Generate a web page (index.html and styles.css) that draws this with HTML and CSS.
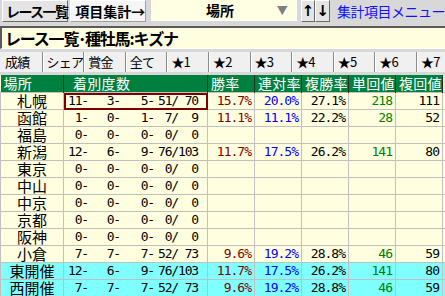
FILE: index.html
```html
<!DOCTYPE html>
<html lang="ja">
<head>
  <meta charset="UTF-8" />
  <title>レース一覧 - 種牡馬</title>
  <link rel="stylesheet" href="styles.css">
</head>
<body>
  <div class="toolbar">
    <button class="btn">レース一覧</button>
    <button class="btn btn-on">項目集計→</button>
    <div class="select">
      <span class="select-text">場所</span>
      <span class="select-arrow">▼</span>
    </div>
    <button class="btn arrow">↑</button>
    <button class="btn arrow">↓</button>
    <span class="link">集計項目メニュー</span>
  </div>

  <div class="title-box">レース一覧･種牡馬:キズナ</div>

  <div class="tabs">
    <div class="tab active">成績</div>
    <div class="tab">シェア</div>
    <div class="tab">賞金</div>
    <div class="tab">全て</div>
    <div class="tab">★1</div>
    <div class="tab">★2</div>
    <div class="tab">★3</div>
    <div class="tab">★4</div>
    <div class="tab">★5</div>
    <div class="tab">★6</div>
    <div class="tab">★7</div>
  </div>

  <table class="grid">
    <colgroup>
      <col class="c-place"><col class="c-count"><col class="c-rate"><col class="c-rate">
      <col class="c-rate"><col class="c-rate"><col class="c-rate"><col class="c-more">
    </colgroup>
    <thead>
      <tr>
        <th>場所</th><th class="h-count">着別度数</th><th>勝率</th><th>連対率</th>
        <th>複勝率</th><th>単回値</th><th>複回値</th><th></th>
      </tr>
    </thead>
    <tbody id="rows"></tbody>
  </table>

  <script>
    // 場所, 1着, 2着, 3着, 着外, 計, 勝率, 連対率, 複勝率, 単回値, 複回値
    var data = [
      ['札幌', 11, 3, 5, 51, 70, '15.7%', '20.0%', '27.1%', 218, 111],
      ['函館', 1, 0, 1, 7, 9, '11.1%', '11.1%', '22.2%', 28, 52],
      ['福島', 0, 0, 0, 0, 0],
      ['新潟', 12, 6, 9, 76, 103, '11.7%', '17.5%', '26.2%', 141, 80],
      ['東京', 0, 0, 0, 0, 0],
      ['中山', 0, 0, 0, 0, 0],
      ['中京', 0, 0, 0, 0, 0],
      ['京都', 0, 0, 0, 0, 0],
      ['阪神', 0, 0, 0, 0, 0],
      ['小倉', 7, 7, 7, 52, 73, '9.6%', '19.2%', '28.8%', 46, 59],
      ['東開催', 12, 6, 9, 76, 103, '11.7%', '17.5%', '26.2%', 141, 80, 'sum'],
      ['西開催', 7, 7, 7, 52, 73, '9.6%', '19.2%', '28.8%', 46, 59, 'sum']
    ];

    var tbody = document.getElementById('rows');
    data.forEach(function (r, i) {
      var tr = document.createElement('tr');
      if (r[11] === 'sum') tr.className = 'sum';
      var has = r.length > 6;
      tr.innerHTML =
        '<td class="place">' + r[0] + '</td>' +
        '<td class="count' + (i === 0 ? ' sel' : '') + '"><div class="counts">' +
          '<span class="w1">' + r[1] + '-</span>' +
          '<span class="w2">' + r[2] + '-</span>' +
          '<span class="w3">' + r[3] + '-</span>' +
          '<span class="w4">' + r[4] + '/</span>' +
          '<span class="w5">' + r[5] + '</span>' +
        '</div></td>' +
        '<td class="num win">' + (has ? r[6] : '') + '</td>' +
        '<td class="num ren">' + (has ? r[7] : '') + '</td>' +
        '<td class="num">' + (has ? r[8] : '') + '</td>' +
        '<td class="num tan">' + (has ? r[9] : '') + '</td>' +
        '<td class="num">' + (has ? r[10] : '') + '</td>' +
        '<td></td>';
      tbody.appendChild(tr);
    });
  </script>
</body>
</html>
```

FILE: styles.css
```css
* {
  box-sizing: border-box;
}

body {
  margin: 0;
  width: 445px;
  height: 296px;
  overflow: hidden;
  background-color: #d8d8d8;
  font-family: "Noto Sans CJK JP", sans-serif;
  color: #000;
}

/* ツールバー */
.toolbar {
  display: flex;
  align-items: stretch;
  height: 22px;
  padding-left: 2px;
  white-space: nowrap;
}

.btn {
  font-family: "Noto Sans CJK JP", sans-serif;
  font-weight: bold;
  font-size: 14px;
  line-height: 18px;
  letter-spacing: -1.6px;
  padding: 0 0 0 3px;
  margin: 0;
  width: 71px;
  background-color: #e4e4e4;
  border: 1px solid;
  border-color: #fff #6a6a6a #6a6a6a #fff;
  color: #000;
  text-align: left;
  white-space: nowrap;
  overflow: visible;
}

.btn-on {
  width: 76px;
  margin-left: 2px;
  padding-left: 4px;
  letter-spacing: 0;
  background-color: #f6f6f6;
  border-color: #fff #a0a0a0 #a0a0a0 #fff;
}

.select {
  width: 189px;
  margin: 0 4px 1px 5px;
  background-color: #ffffe4;
  border-bottom: 1px solid #fff;
  border-right: 1px solid #fff;
  display: flex;
  align-items: center;
}

.select-text {
  flex: 1;
  text-align: center;
  font-weight: bold;
  font-size: 14px;
  padding-left: 12px;
}

.select-arrow {
  color: #808080;
  font-size: 11px;
  margin-right: 8px;
}

.arrow {
  width: 15px;
  padding: 0;
  text-align: center;
  font-size: 15px;
  letter-spacing: 0;
  font-family: "DejaVu Sans", sans-serif;
}

.link {
  margin-left: 7px;
  color: #1010ff;
  font-size: 14px;
  line-height: 22px;
  letter-spacing: -0.5px;
}

/* タイトル */
.title-box {
  margin-top: 4px;
  height: 23px;
  background-color: #ffffe0;
  border-top: 2px solid #5a5a5a;
  border-left: 2px solid #5a5a5a;
  border-bottom: 1px solid #fff;
  padding-left: 3px;
  font-weight: bold;
  font-size: 16px;
  line-height: 20px;
  letter-spacing: -1.2px;
  white-space: nowrap;
}

/* タブ */
.tabs {
  display: flex;
  margin-top: 3px;
  height: 20px;
  background-color: #f0f0f0;
}

.tab {
  flex: 0 0 41.6px;
  padding-left: 4px;
  font-size: 13px;
  line-height: 20px;
  letter-spacing: -0.8px;
  border-left: 1px solid #8a8a8a;
  box-shadow: inset 1px 0 #fff;
  white-space: nowrap;
}

.tab.active {
  border-left: none;
  box-shadow: none;
  padding-left: 5px;
}

/* 表 */
.grid {
  margin-top: 3px;
  border-collapse: collapse;
  table-layout: fixed;
  width: 475px;
  background-color: #ffffe0;
}

.c-place { width: 63px; }
.c-count { width: 144px; }
.c-rate  { width: 47px; }
.c-more  { width: 33px; }

.grid th {
  height: 17px;
  padding: 0 0 0 3px;
  background-color: #00803f;
  color: #fff;
  font-weight: normal;
  font-size: 14px;
  line-height: 17px;
  letter-spacing: 0.3px;
  text-align: left;
  border-right: 1px solid #203020;
  white-space: nowrap;
}

.grid th:last-child {
  background-color: #e8e8e8;
}

.grid .h-count {
  padding-left: 9px;
}

.grid td {
  height: 17px;
  padding: 0 3px 0 0;
  border: 1px solid #c0c0c0;
  font-size: 15px;
  line-height: 16px;
  white-space: nowrap;
}

.grid tr.sum td {
  background-color: #80ffff;
}

.grid td.place {
  text-align: center;
  padding: 0;
}

.grid td.count {
  padding: 0;
}

.grid td.sel {
  outline: 2px solid #7a0000;
  outline-offset: -2px;
}

.counts {
  display: flex;
  font-family: "DejaVu Sans Mono", monospace;
  font-size: 13px;
  letter-spacing: -1.2px;
}

.counts span {
  text-align: right;
  flex: none;
}

.w1 { width: 24px; }
.w2 { width: 32px; }
.w3 { width: 34px; }
.w4 { width: 24px; }
.w5 { width: 20px; }

.grid td.num {
  text-align: right;
  font-family: "DejaVu Sans Mono", monospace;
  font-size: 13px;
  letter-spacing: -1px;
}

.win { color: #800000; }
.ren { color: #0000ff; }
.tan { color: #008000; }
```
